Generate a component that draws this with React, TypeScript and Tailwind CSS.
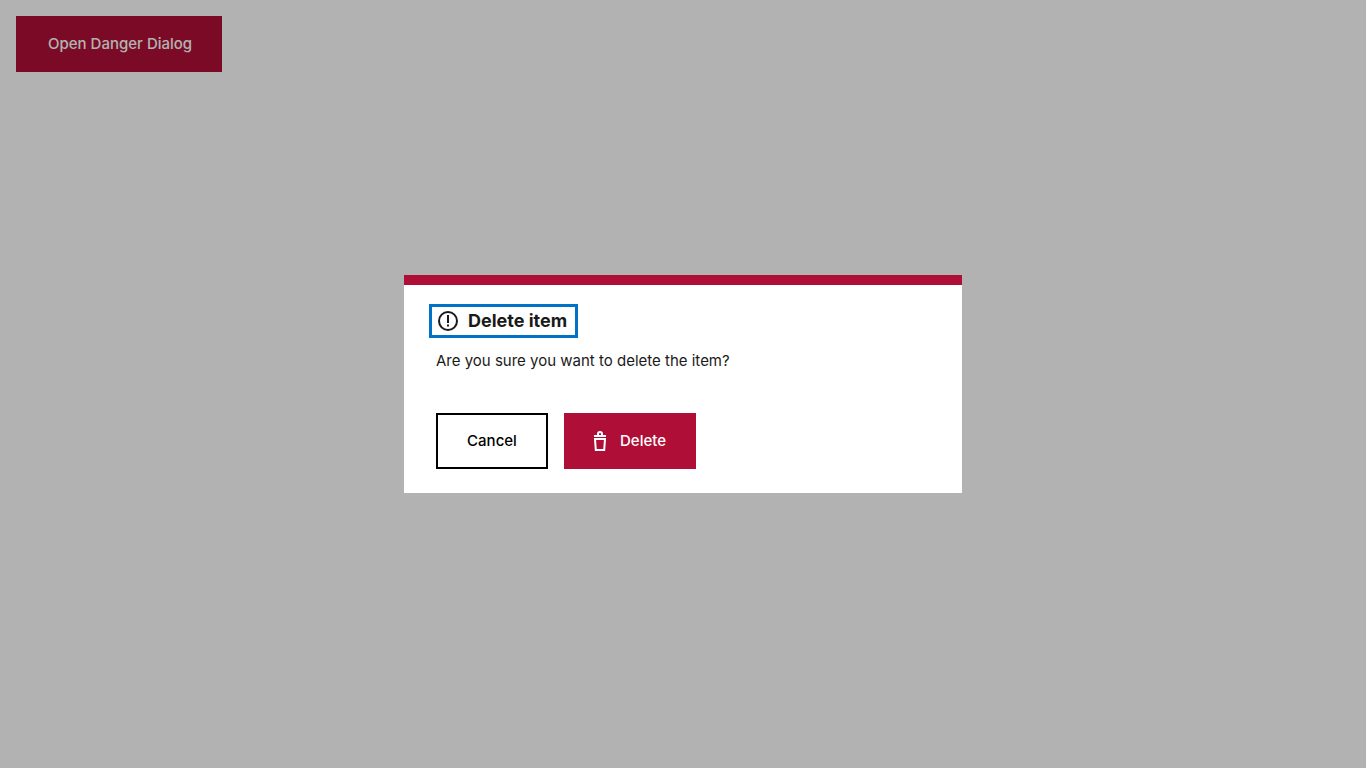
import { useState } from "react";

function AlertIcon() {
  return (
    <svg className="size-6 shrink-0" viewBox="0 0 24 24" fill="none" aria-hidden="true">
      <circle cx="12" cy="12" r="9" stroke="currentColor" strokeWidth="2" />
      <path d="M11 6h2v8h-2zM11 15.5h2v2h-2z" fill="currentColor" />
    </svg>
  );
}

function TrashIcon() {
  return (
    <svg className="size-6 shrink-0" viewBox="0 0 24 24" fill="none" aria-hidden="true">
      <path d="M6 6h12v2H6z" fill="currentColor" />
      <path d="M10 6V5a2 2 0 0 1 4 0v1" stroke="currentColor" strokeWidth="2" />
      <path d="M7 10h10l-.8 11H7.8z" stroke="currentColor" strokeWidth="2" />
    </svg>
  );
}

export default function App() {
  const [open, setOpen] = useState(true);

  return (
    <main className="min-h-screen bg-white p-4 font-['Inter','Liberation_Sans',sans-serif] text-[#1a1a1a]">
      <button
        type="button"
        onClick={() => setOpen(true)}
        className="h-14 bg-[#af0f36] pr-[30px] pl-8 text-[15px] leading-6 font-medium text-white"
      >
        Open Danger Dialog
      </button>

      {open && (
        <div className="fixed inset-0 flex items-center justify-center bg-black/30">
          <section
            role="alertdialog"
            aria-modal="true"
            aria-labelledby="dialog-title"
            aria-describedby="dialog-text"
            className="w-full max-w-[558px] border-t-10 border-[#af0f36] bg-white px-8 py-6"
          >
            <h1
              id="dialog-title"
              tabIndex={-1}
              className="-mx-1 -my-0.5 flex w-fit items-center gap-2 py-0.5 pr-2 pl-1 text-[18px] leading-6 font-bold outline-3 outline-[#0072c8]"
            >
              <AlertIcon />
              Delete item
            </h1>
            <p id="dialog-text" className="mt-4 text-[15px] leading-6">
              Are you sure you want to delete the item?
            </p>
            <div className="mt-10 flex flex-wrap gap-4">
              <button
                type="button"
                onClick={() => setOpen(false)}
                className="h-14 min-w-28 border-2 border-black px-7 text-[15px] leading-6 font-medium text-black"
              >
                Cancel
              </button>
              <button
                type="button"
                onClick={() => setOpen(false)}
                className="flex h-14 items-center gap-2 bg-[#af0f36] pr-[30px] pl-6 text-[15px] leading-6 font-medium text-white"
              >
                <TrashIcon />
                Delete
              </button>
            </div>
          </section>
        </div>
      )}
    </main>
  );
}
